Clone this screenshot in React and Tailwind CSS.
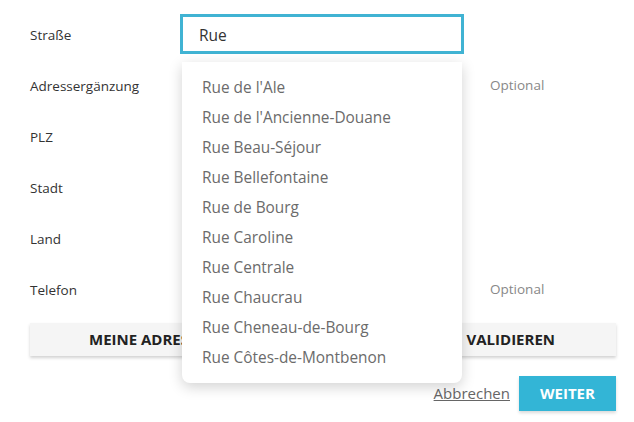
const streets = [
  "Rue de l'Ale",
  "Rue de l'Ancienne-Douane",
  "Rue Beau-Séjour",
  "Rue Bellefontaine",
  "Rue de Bourg",
  "Rue Caroline",
  "Rue Centrale",
  "Rue Chaucrau",
  "Rue Cheneau-de-Bourg",
  "Rue Côtes-de-Montbenon",
];

function Row({ label, optional, children }) {
  return (
    <div className="flex items-center h-10">
      <div className="w-[150px] shrink-0 pt-[3px] text-[13.5px] text-[#333]">{label}</div>
      <div className="w-[284px] shrink-0 h-10">{children}</div>
      {optional && <div className="ml-[26px] pt-[1px] text-[13.5px] text-[#888]">Optional</div>}
    </div>
  );
}

export default function App() {
  return (
    <div className="w-[634px] h-[422px] bg-white px-[30px] pt-[14px] font-['Open_Sans',sans-serif] relative">
      <div className="relative flex flex-col gap-[11px]">
        <Row label="Straße">
          <div className="h-10 border-[3px] border-[#40b3d3] flex items-center px-4 pt-[3px] text-[15.5px] text-[#333]">
            Rue
          </div>
        </Row>
        <Row label="Adressergänzung" optional />
        <Row label="PLZ" />
        <Row label="Stadt" />
        <Row label="Land" />
        <Row label="Telefon" optional />

        <div className="absolute left-[152px] top-[48px] w-[280px] bg-white rounded-b-lg shadow-[0_4px_14px_rgba(0,0,0,0.18)] pt-[11px] pb-[10px] z-10">
          {streets.map((s) => (
            <div key={s} className="h-[30px] flex items-center px-5 text-[15.4px] text-[#6b6b6b]">
              {s}
            </div>
          ))}
        </div>
      </div>

      <button className="mt-[14px] w-[586px] h-[33px] bg-[#f5f5f5] shadow-[0_2px_3px_rgba(0,0,0,0.18)] text-[15px] font-bold text-[#222] flex items-center justify-between pl-[59px] pr-[61px]">
        <span>MEINE ADRESSE</span>
        <span>VALIDIEREN</span>
      </button>

      <div className="mt-5 flex items-center justify-end gap-[9px] w-[586px]">
        <a href="#" className="text-[15px] text-[#666] underline">Abbrechen</a>
        <button className="w-[97px] h-[35px] bg-[#33b5d6] text-white text-[15px] font-bold shadow-[0_2px_3px_rgba(0,0,0,0.15)]">
          WEITER
        </button>
      </div>
    </div>
  );
}
